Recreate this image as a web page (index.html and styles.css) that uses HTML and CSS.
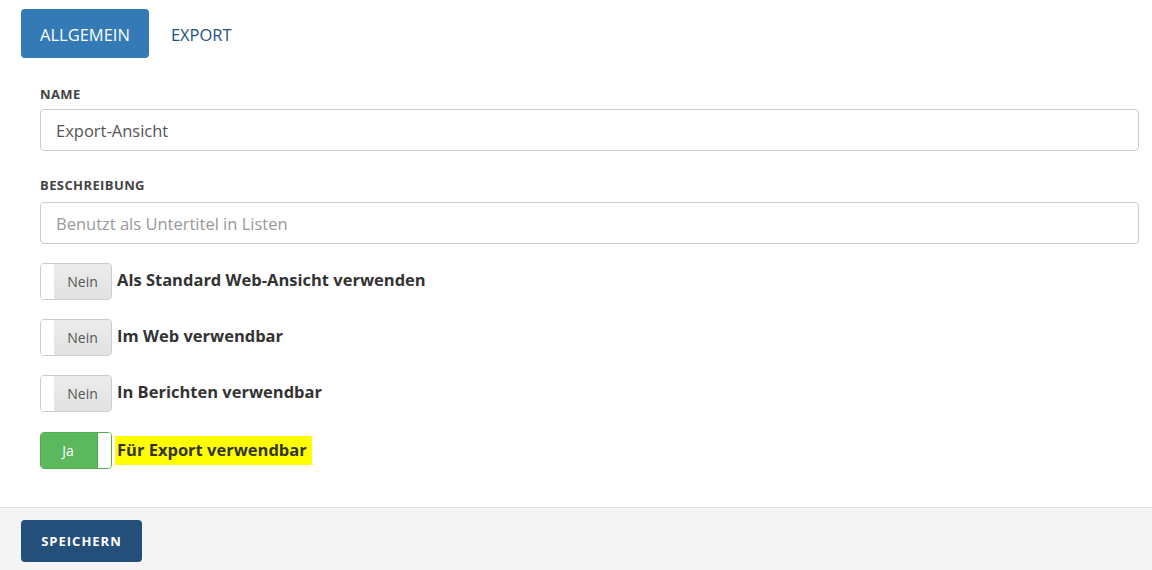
FILE: index.html
```html
<!DOCTYPE html>
<html lang="de">
<head>
<meta charset="utf-8">
<title>Export-Ansicht</title>
<link rel="stylesheet" href="styles.css">
</head>
<body>
<div class="page">
  <nav class="tabs">
    <a class="tab active">ALLGEMEIN</a>
    <a class="tab">EXPORT</a>
  </nav>
  <form class="form">
    <div class="field">
      <label class="label">NAME</label>
      <input class="input" type="text" value="Export-Ansicht">
    </div>
    <div class="field field-2">
      <label class="label">BESCHREIBUNG</label>
      <input class="input" type="text" placeholder="Benutzt als Untertitel in Listen">
    </div>
    <div class="switches">
      <div class="switch-row">
        <span class="switch off"><span class="handle"></span><span class="state">Nein</span></span>
        <span class="switch-label">Als Standard Web-Ansicht verwenden</span>
      </div>
      <div class="switch-row">
        <span class="switch off"><span class="handle"></span><span class="state">Nein</span></span>
        <span class="switch-label">Im Web verwendbar</span>
      </div>
      <div class="switch-row">
        <span class="switch off"><span class="handle"></span><span class="state">Nein</span></span>
        <span class="switch-label">In Berichten verwendbar</span>
      </div>
      <div class="switch-row">
        <span class="switch on"><span class="state">Ja</span><span class="handle"></span></span>
        <span class="switch-label highlight">Für Export verwendbar</span>
      </div>
    </div>
  </form>
</div>
<footer class="footer">
  <button class="save" type="button">SPEICHERN</button>
</footer>
</body>
</html>
```

FILE: styles.css
```css
* { box-sizing: border-box; }
html, body {
  margin: 0;
  padding: 0;
  background: #fff;
  font-family: "Open Sans", "Liberation Sans", sans-serif;
  color: #333;
}
.page {
  height: 507px;
  padding: 9px 0 0 21px;
}
.tabs {
  display: flex;
  align-items: center;
  height: 49px;
}
.tab {
  display: flex;
  align-items: center;
  height: 49px;
  padding: 1px 19px 0;
  font-size: 16.5px;
  color: #23527c;
  border-radius: 4px;
  margin-right: 3px;
}
.tab.active {
  background: #337ab7;
  color: #fff;
}
.form {
  padding: 28px 13px 0 19px;
}
.field {
  display: flex;
  flex-direction: column;
}
.field-2 { margin-top: 26px; }
.label {
  font-size: 13px;
  font-weight: 700;
  line-height: 17px;
  letter-spacing: 0.4px;
  color: #444;
  margin-bottom: 6px;
}
.field-2 .label { margin-bottom: 8px; }
.input {
  width: 100%;
  height: 42px;
  border: 1px solid #ccc;
  border-radius: 4px;
  padding: 1px 15px 0;
  font-family: inherit;
  font-size: 16.5px;
  color: #555;
  outline: none;
}
.input::placeholder { color: #999; }
.switches {
  display: flex;
  flex-direction: column;
  gap: 19px;
  margin-top: 19px;
}
.switch-row {
  display: flex;
  align-items: center;
  height: 37px;
}
.switch-row:last-child { margin-top: 1px; }
.switch {
  display: flex;
  width: 72px;
  height: 37px;
  border: 1px solid #ccc;
  border-radius: 4px;
  overflow: hidden;
  flex-shrink: 0;
}
.handle {
  width: 13px;
  background: #fff;
}
.state {
  flex: 1;
  display: flex;
  align-items: center;
  justify-content: center;
  font-size: 14px;
}
.switch.off .state {
  background: linear-gradient(#ececec, #e2e2e2);
  color: #555;
}
.switch.on { border-color: #4cae4c; }
.switch.on .state {
  background: #5cb85c;
  color: #fff;
  padding-right: 2px;
}
.switch.on .handle {
  border-left: 1px solid #4cae4c;
  width: 14px;
}
.switch-label {
  margin-left: 3px;
  padding: 4px 2px;
  font-size: 16.5px;
  font-weight: 700;
  line-height: 21px;
  color: #333;
  position: relative;
  top: -2px;
}
.highlight {
  background: #ffff00;
  padding: 3px 5px 5px 2px;
  top: 0;
}
.footer {
  height: 63px;
  border-top: 1px solid #ddd;
  background: #f4f4f4;
  padding: 12px 0 0 21px;
}
.save {
  width: 121px;
  height: 42px;
  border: none;
  border-radius: 4px;
  background: #234f7a;
  color: #fff;
  font-family: inherit;
  font-weight: 700;
  font-size: 13px;
  letter-spacing: 1px;
}
```
